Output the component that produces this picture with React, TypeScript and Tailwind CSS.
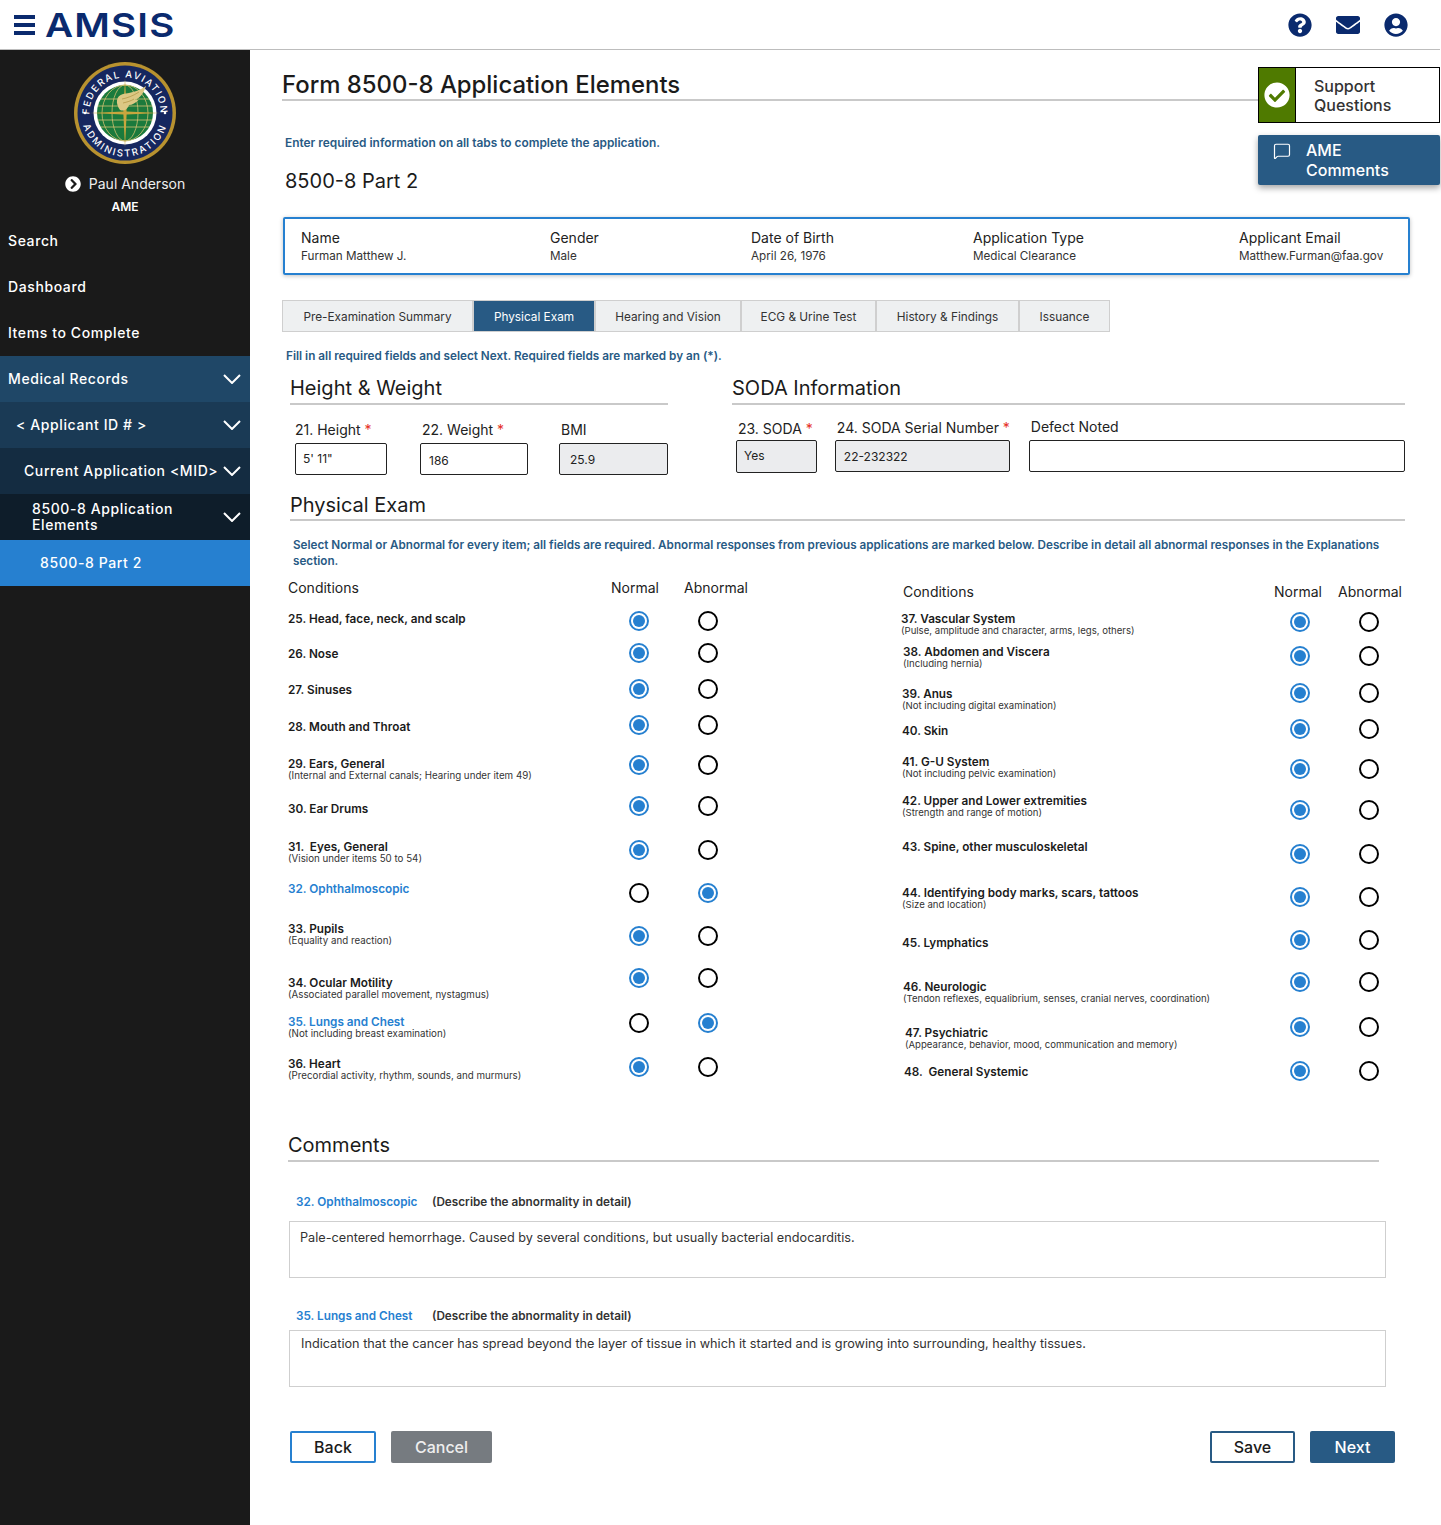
import React from "react";
import { FaQuestionCircle, FaEnvelope, FaUserCircle, FaChevronCircleRight, FaCheckCircle } from "react-icons/fa";
import { MessageSquare } from "lucide-react";

interface Condition {
    title: string;
    sub?: string;
    h: string;
    mt: string;
    ml?: string;
    abnormal?: boolean;
}

const leftConditions: Condition[] = [
    { title: "25. Head, face, neck, and scalp", h: "h-[32px]", mt: "mt-[1px]" },
    { title: "26. Nose", h: "h-[36px]", mt: "mt-[4px]" },
    { title: "27. Sinuses", h: "h-[36px]", mt: "mt-[4px]" },
    { title: "28. Mouth and Throat", h: "h-[40px]", mt: "mt-[5px]" },
    { title: "29. Ears, General", sub: "(Internal and External canals; Hearing under item 49)", h: "h-[41px]", mt: "mt-[2px]" },
    { title: "30. Ear Drums", h: "h-[44px]", mt: "mt-[6px]" },
    { title: "31.  Eyes, General", sub: "(Vision under items 50 to 54)", h: "h-[43px]", mt: "mt-[0px]" },
    { title: "32. Ophthalmoscopic", h: "h-[43px]", mt: "mt-[-1px]", abnormal: true },
    { title: "33. Pupils", sub: "(Equality and reaction)", h: "h-[42px]", mt: "mt-[-4px]" },
    { title: "34. Ocular Motility", sub: "(Associated parallel movement, nystagmus)", h: "h-[45px]", mt: "mt-[8px]" },
    { title: "35. Lungs and Chest", sub: "(Not including breast examination)", h: "h-[44px]", mt: "mt-[2px]", abnormal: true },
    { title: "36. Heart", sub: "(Precordial activity, rhythm, sounds, and murmurs)", h: "h-[30px]", mt: "mt-[0px]" },
];

const rightConditions: Condition[] = [
    { title: "37. Vascular System", sub: "(Pulse, amplitude and character, arms, legs, others)", h: "h-[34px]", mt: "mt-[0px]", ml: "ml-[-1px]" },
    { title: "38. Abdomen and Viscera", sub: "(Including hernia)", h: "h-[37px]", mt: "mt-[-1px]", ml: "ml-[1px]" },
    { title: "39. Anus", sub: "(Not including digital examination)", h: "h-[36px]", mt: "mt-[4px]" },
    { title: "40. Skin", h: "h-[40px]", mt: "mt-[5px]" },
    { title: "41. G-U System", sub: "(Not including pelvic examination)", h: "h-[41px]", mt: "mt-[-4px]" },
    { title: "42. Upper and Lower extremities", sub: "(Strength and range of motion)", h: "h-[44px]", mt: "mt-[-6px]" },
    { title: "43. Spine, other musculoskeletal", h: "h-[43px]", mt: "mt-[-4px]" },
    { title: "44. Identifying body marks, scars, tattoos", sub: "(Size and location)", h: "h-[43px]", mt: "mt-[-1px]" },
    { title: "45. Lymphatics", h: "h-[42px]", mt: "mt-[6px]" },
    { title: "46. Neurologic", sub: "(Tendon reflexes, equalibrium, senses, cranial nerves, coordination)", h: "h-[45px]", mt: "mt-[8px]", ml: "ml-[1px]" },
    { title: "47. Psychiatric", sub: "(Appearance, behavior, mood, communication and memory)", h: "h-[44px]", mt: "mt-[9px]", ml: "ml-[3px]" },
    { title: "48.  General Systemic", h: "h-[30px]", mt: "mt-[4px]", ml: "ml-[2px]" },
];

const tabs = [
    { label: "Pre-Examination Summary", w: "w-[191px]" },
    { label: "Physical Exam", w: "w-[122px]", active: true },
    { label: "Hearing and Vision", w: "w-[146px]" },
    { label: "ECG & Urine Test", w: "w-[135px]" },
    { label: "History & Findings", w: "w-[143px]" },
    { label: "Issuance", w: "w-[91px]" },
];

const Radio = ({ checked }: { checked: boolean }) =>
    checked ? (
        <div className="flex h-[20px] w-[20px] shrink-0 items-center justify-center rounded-full border-2 border-[#2680d0] bg-white">
            <div className="h-[12px] w-[12px] rounded-full bg-[#2680d0]" />
        </div>
    ) : (
        <div className="h-[20px] w-[20px] shrink-0 rounded-full border-2 border-black bg-white" />
    );

const ConditionRow = ({ item, labelW, subSize }: { item: Condition; labelW: string; subSize: string }) => (
    <div className={`flex items-start ${item.h}`}>
        <div className={`${labelW} shrink-0`}>
            <div className={`${item.mt} ${item.ml ?? ""}`}>
                <div className={`whitespace-pre text-[11.75px] font-semibold leading-[14px] ${item.abnormal ? "text-[#2680d0]" : "text-[#1b1b1b]"}`}>
                    {item.title}
                </div>
                {item.sub && <div className={`leading-[10px] text-[#333] ${subSize}`}>{item.sub}</div>}
            </div>
        </div>
        <Radio checked={!item.abnormal} />
        <div className="ml-[49px]">
            <Radio checked={!!item.abnormal} />
        </div>
    </div>
);

const Chevron = () => (
    <svg viewBox="0 0 18 10" className="h-[10px] w-[18px] shrink-0" fill="none" stroke="#fff" strokeWidth="2">
        <path d="M1 1l8 8 8-8" />
    </svg>
);

const SideItem = ({ label, bg, pl, chevron }: { label: string; bg: string; pl: string; chevron?: boolean }) => (
    <div className={`flex h-[46px] items-center justify-between pr-[9px] ${bg} ${pl}`}>
        <span className="text-[14px] font-medium leading-[16px] tracking-[0.6px] text-white">{label}</span>
        {chevron && <Chevron />}
    </div>
);

const FaaSeal = () => (
    <svg viewBox="0 0 104 104" className="h-[104px] w-[104px]">
        <defs>
            <path id="sealTop" d="M 18.6 64 A 35.5 35.5 0 1 1 85.4 64" />
            <path id="sealBottom" d="M 11.2 37 A 43.5 43.5 0 1 0 92.8 37" />
        </defs>
        <circle cx="52" cy="52" r="51" fill="#b8922f" />
        <circle cx="52" cy="52" r="47.5" fill="#16275f" />
        <circle cx="52" cy="52" r="31.5" fill="#fff" />
        <circle cx="52" cy="52" r="28" fill="#1b7a3c" />
        <g fill="none" stroke="#d2c071" strokeWidth="0.8">
            <ellipse cx="52" cy="52" rx="13" ry="28" />
            <ellipse cx="52" cy="52" rx="23" ry="28" />
            <path d="M28 38 H76 M24.5 45 H79.5 M24.5 59 H79.5 M28 66 H76" />
        </g>
        <path d="M52 17 L53.6 50.4 L87 52 L53.6 53.6 L52 87 L50.4 53.6 L17 52 L50.4 50.4 Z" fill="#c9a63e" />
        <path d="M47 49 C42 42 43 35 50 33 C58 32 66 30 73 25 C71 32 67 37 62 39 C63.5 39 65 39 66 38.5 C63 42 59 44 56 44 C55 47 52 51 47 49 Z" fill="#dcc884" />
        <path d="M49 38 C54 37 60 35 66 31 M50 42 C54 41 58 40 61 38" fill="none" stroke="#a88a35" strokeWidth="0.6" />
        <circle cx="12" cy="52" r="1.3" fill="#fff" />
        <circle cx="92" cy="52" r="1.3" fill="#fff" />
        <text fill="#fff" fontSize="9.6" fontWeight="500" letterSpacing="1.5" fontFamily="Inter, sans-serif">
            <textPath href="#sealTop" startOffset="50%" textAnchor="middle">FEDERAL AVIATION</textPath>
        </text>
        <text fill="#fff" fontSize="9.6" fontWeight="500" letterSpacing="2" fontFamily="Inter, sans-serif">
            <textPath href="#sealBottom" startOffset="50%" textAnchor="middle">ADMINISTRATION</textPath>
        </text>
    </svg>
);

const Field = ({ children, cls }: { children?: React.ReactNode; cls: string }) => (
    <div className={`flex items-center rounded-[2px] border border-[#222] text-[12px] text-[#222] ${cls}`}>{children}</div>
);

const Req = () => <span className="text-[#e5301f]"> *</span>;

const SectionHead = ({ children, cls = "h-[31px]" }: { children: React.ReactNode; cls?: string }) => (
    <div className={`flex items-center border-b-2 border-[#c9c9c9] text-[20px] leading-[24px] text-[#1b1b1b] ${cls}`}>{children}</div>
);

export default function App() {
    return (
        <div className="flex min-h-[1525px] w-[1440px] flex-col bg-white font-['Inter',sans-serif] text-[#1b1b1b]">
            <header className="flex h-[50px] items-center justify-between border-b border-[#bdbdbd] pl-[14px] pr-[32px]">
                <div className="flex items-center">
                    <div className="flex w-[21px] flex-col gap-[4px]">
                        <div className="h-[4px] bg-[#0a2a6e]" />
                        <div className="h-[4px] bg-[#0a2a6e]" />
                        <div className="h-[4px] bg-[#0a2a6e]" />
                    </div>
                    <span className="ml-[10px] inline-block origin-left scale-x-[1.17] text-[33px] font-semibold leading-[36px] tracking-[1px] text-[#0a2a6e]">AMSIS</span>
                </div>
                <div className="flex items-center gap-[24px] text-[#0a2a6e]">
                    <FaQuestionCircle className="h-[24px] w-[24px]" />
                    <FaEnvelope className="h-[24px] w-[24px]" />
                    <FaUserCircle className="h-[24px] w-[24px]" />
                </div>
            </header>

            <div className="flex flex-1">
                <aside className="w-[250px] shrink-0 bg-[#1a1a1a]">
                    <div className="flex h-[168px] flex-col items-center pt-[11px]">
                        <FaaSeal />
                        <div className="mt-[10px] flex items-center gap-[8px] text-white">
                            <FaChevronCircleRight className="h-[16px] w-[16px]" />
                            <span className="text-[14px] leading-[18px] text-[#eee]">Paul Anderson</span>
                        </div>
                        <div className="mt-[7px] text-[12px] font-semibold leading-[14px] text-white">AME</div>
                    </div>
                    <SideItem label="Search" bg="" pl="pl-[8px]" />
                    <SideItem label="Dashboard" bg="" pl="pl-[8px]" />
                    <SideItem label="Items to Complete" bg="" pl="pl-[8px]" />
                    <SideItem label="Medical Records" bg="bg-[#1f4767]" pl="pl-[8px]" chevron />
                    <SideItem label="< Applicant ID # >" bg="bg-[#1a3a55]" pl="pl-[16px]" chevron />
                    <SideItem label="Current Application <MID>" bg="bg-[#142c41]" pl="pl-[24px]" chevron />
                    <SideItem label="8500-8 Application Elements" bg="bg-[#0e1d2a]" pl="pl-[32px]" chevron />
                    <SideItem label="8500-8 Part 2" bg="bg-[#2680d0]" pl="pl-[40px]" />
                </aside>

                <main className="min-w-0 flex-1 pl-[32px] pt-[17px]">
                    <div className="flex">
                        <div className="h-[118px] flex-1">
                            <h1 className="flex h-[34px] items-end border-b-2 border-[#c9c9c9] pb-[1px] text-[23.9px] font-medium leading-[26px] text-[#1b1b1b]">
                                Form 8500-8 Application Elements
                            </h1>
                            <p className="ml-[3px] mt-[35px] text-[11.9px] font-semibold leading-[14px] text-[#285a84]">
                                Enter required information on all tabs to complete the application.
                            </p>
                            <p className="ml-[3px] mt-[19px] text-[20px] leading-[24px] text-[#1b1b1b]">8500-8 Part 2</p>
                        </div>
                        <div className="w-[182px] shrink-0">
                            <div className="flex h-[56px] border border-black">
                                <div className="flex w-[37px] shrink-0 items-center justify-center border-r border-black bg-[#4f7a00]">
                                    <FaCheckCircle className="h-[26px] w-[26px] text-white" />
                                </div>
                                <div className="pl-[18px] pt-[9px] text-[16px] font-medium leading-[19px] text-[#333]">
                                    Support
                                    <br />
                                    Questions
                                </div>
                            </div>
                            <div className="mt-[12px] flex h-[50px] rounded-[2px] bg-[#285a84] pl-[15px] pt-[5px] text-white shadow-[0_3px_6px_rgba(0,0,0,0.35)]">
                                <MessageSquare className="mt-[2px] h-[18px] w-[18px]" strokeWidth={1.6} />
                                <div className="ml-[15px] text-[16px] font-medium leading-[20px]">
                                    AME
                                    <br />
                                    Comments
                                </div>
                            </div>
                        </div>
                    </div>

                    <div className="ml-[1px] mt-[32px] grid h-[58px] w-[1127px] grid-cols-[249px_201px_222px_266px_1fr] items-center rounded-[2px] border-2 border-[#2680d0] pl-[16px] shadow-[0_1px_4px_rgba(0,0,0,0.25)]">
                        {[
                            ["Name", "Furman Matthew J."],
                            ["Gender", "Male"],
                            ["Date of Birth", "April 26, 1976"],
                            ["Application Type", "Medical Clearance"],
                            ["Applicant Email", "Matthew.Furman@faa.gov"],
                        ].map(([k, v]) => (
                            <div key={k}>
                                <div className="text-[14px] leading-[18px] text-[#222]">{k}</div>
                                <div className="mt-[1px] text-[11.7px] leading-[16px] text-[#333]">{v}</div>
                            </div>
                        ))}
                    </div>

                    <div className="mt-[25px] flex h-[32px]">
                        {tabs.map((t) => (
                            <div
                                key={t.label}
                                className={`flex items-center justify-center border border-[#cfcfcf] pt-[4px] text-[11.8px] ${t.w} ${t.active ? "bg-[#285a84] text-white" : "bg-[#eef0f1] text-[#333]"}`}
                            >
                                {t.label}
                            </div>
                        ))}
                    </div>

                    <p className="ml-[4px] mt-[17px] text-[11.75px] font-semibold leading-[14px] text-[#285a84]">
                        Fill in all required fields and select Next. Required fields are marked by an (*).
                    </p>

                    <div className="ml-[8px] mt-[10px] flex">
                        <div className="w-[378px]">
                            <SectionHead cls="h-[32px] pb-[1px]">Height &amp; Weight</SectionHead>
                            <div className="mt-[17px] flex text-[14px] leading-[16px] text-[#222]">
                                <div className="ml-[5px] w-[92px]">
                                    <div>21. Height<Req /></div>
                                    <Field cls="mt-[5px] h-[32px] pl-[7px]">5' 11"</Field>
                                </div>
                                <div className="ml-[33px] w-[108px]">
                                    <div className="pl-[2px]">22. Weight<Req /></div>
                                    <Field cls="mt-[5px] h-[32px] pl-[8px] pt-[3px]">186</Field>
                                </div>
                                <div className="ml-[31px] w-[109px]">
                                    <div className="pl-[2px]">BMI</div>
                                    <Field cls="mt-[5px] h-[32px] bg-[#ebecee] pl-[10px] pt-[2px]">25.9</Field>
                                </div>
                            </div>
                        </div>
                        <div className="ml-[64px] w-[673px]">
                            <SectionHead cls="h-[32px] pb-[1px]">SODA Information</SectionHead>
                            <div className="mt-[14px] flex whitespace-nowrap text-[14px] leading-[16px] text-[#222]">
                                <div className="ml-[4px] w-[81px]">
                                    <div className="mt-[2px] pl-[2px]">23. SODA<Req /></div>
                                    <Field cls="mt-[3px] h-[33px] items-start bg-[#ebecee] pl-[7px] pt-[7px]">Yes</Field>
                                </div>
                                <div className="ml-[18px] w-[175px]">
                                    <div className="mt-[1px] pl-[2px]">24. SODA Serial Number<Req /></div>
                                    <Field cls="mt-[4px] h-[32px] bg-[#ebecee] pl-[8px] pt-[2px]">22-232322</Field>
                                </div>
                                <div className="ml-[19px] w-[377px]">
                                    <div className="pl-[2px]">Defect Noted</div>
                                    <Field cls="mt-[5px] h-[32px]" />
                                </div>
                            </div>
                        </div>
                    </div>

                    <div className="ml-[8px] mt-[15px] w-[1115px]">
                        <SectionHead>Physical Exam</SectionHead>
                        <p className="ml-[3px] mt-[16px] w-[1100px] text-[11.7px] font-semibold leading-[16px] text-[#285a84]">
                            Select Normal or Abnormal for every item; all fields are required. Abnormal responses from previous applications are marked below. Describe in detail all abnormal responses in the Explanations section.
                        </p>
                    </div>

                    <div className="ml-[6px] mt-[8px] flex">
                        <div className="w-[614px] shrink-0">
                            <div className="mb-[14px] grid h-[20px] grid-cols-[323px_73px_auto] items-center pb-[4px] text-[14px] text-[#222]">
                                <span>Conditions</span>
                                <span>Normal</span>
                                <span>Abnormal</span>
                            </div>
                            {leftConditions.map((c) => (
                                <ConditionRow key={c.title} item={c} labelW="w-[341px]" subSize="text-[9.75px]" />
                            ))}
                        </div>
                        <div className="pt-[4px]">
                            <div className="mb-[11px] ml-[1px] grid h-[20px] grid-cols-[371px_64px_auto] items-center pb-[4px] text-[14px] text-[#222]">
                                <span>Conditions</span>
                                <span>Normal</span>
                                <span>Abnormal</span>
                            </div>
                            {rightConditions.map((c) => (
                                <ConditionRow key={c.title} item={c} labelW="w-[388px]" subSize="text-[9.6px]" />
                            ))}
                        </div>
                    </div>

                    <div className="ml-[6px] mt-[40px] w-[1091px]">
                        <SectionHead cls="h-[31px] pb-[2px]">Comments</SectionHead>
                    </div>

                    <div className="ml-[7px] w-[1097px]">
                        <div className="ml-[7px] mt-[33px] flex text-[11.75px] font-semibold leading-[14px]">
                            <span className="w-[136px] text-[#2680d0]">32. Ophthalmoscopic</span>
                            <span className="text-[#333]">(Describe the abnormality in detail)</span>
                        </div>
                        <div className="mt-[12px] h-[57px] border border-[#cfcfcf] px-[10px] pt-[8px] text-[12.7px] leading-[16px] text-[#333]">
                            Pale-centered hemorrhage. Caused by several conditions, but usually bacterial endocarditis.
                        </div>
                        <div className="ml-[7px] mt-[31px] flex text-[11.75px] font-semibold leading-[14px]">
                            <span className="w-[136px] text-[#2680d0]">35. Lungs and Chest</span>
                            <span className="text-[#333]">(Describe the abnormality in detail)</span>
                        </div>
                        <div className="mt-[7px] h-[57px] border border-[#cfcfcf] px-[11px] pt-[5px] text-[12.7px] leading-[16px] text-[#333]">
                            Indication that the cancer has spread beyond the layer of tissue in which it started and is growing into surrounding, healthy tissues.
                        </div>
                    </div>

                    <div className="ml-[8px] mt-[44px] flex w-[1105px] justify-between">
                        <div className="flex gap-[15px]">
                            <button className="h-[32px] w-[86px] rounded-[2px] border-2 border-[#2680d0] bg-white text-[16px] font-medium text-[#1b1b1b]">Back</button>
                            <button className="h-[32px] w-[101px] rounded-[2px] bg-[#767b80] text-[16px] font-medium text-[#eee]">Cancel</button>
                        </div>
                        <div className="flex gap-[15px]">
                            <button className="h-[32px] w-[85px] rounded-[2px] border-2 border-[#285a84] bg-white text-[16px] font-medium text-[#1b1b1b]">Save</button>
                            <button className="h-[32px] w-[85px] rounded-[2px] bg-[#285a84] text-[16px] font-medium text-white">Next</button>
                        </div>
                    </div>
                </main>
            </div>
        </div>
    );
}
